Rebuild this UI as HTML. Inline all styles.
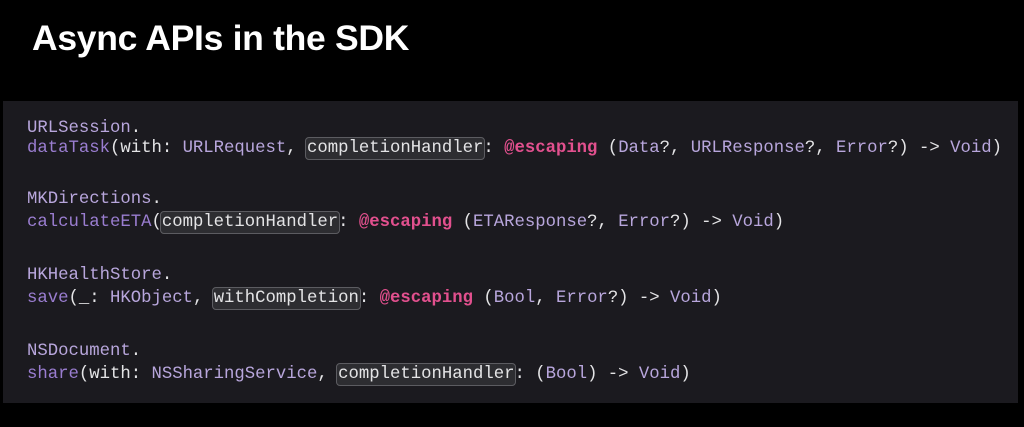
<!DOCTYPE html>
<html><head><meta charset="utf-8"><style>
body{margin:0;width:1024px;height:427px;background:#000;overflow:hidden;position:relative;font-family:"Liberation Sans",sans-serif}
h1{position:absolute;left:32px;top:18px;margin:0;font-size:35.5px;font-weight:bold;color:#fff;letter-spacing:-0.3px}
.panel{position:absolute;left:3px;top:101px;width:1015px;height:302px;background:#1b1a1f}
.l{position:absolute;left:27px;font-family:"Liberation Mono",monospace;font-size:17.3px;color:#e4e4e6;white-space:pre;line-height:20px}
.t{color:#b8a6dc}.f{color:#9a7dd0}.k{color:#e2508e;font-weight:bold}
.b{background:#2d2d31;border:1px solid #5c5c61;border-radius:4px;padding:1px 1px;margin:0 -2px}
</style></head><body>
<h1>Async APIs in the SDK</h1>
<div class="panel"></div>
<div class="l" style="top:119px"><span class="t">URLSession</span>.</div>
<div class="l" style="top:139px"><span class="f">dataTask</span>(with: <span class="t">URLRequest</span>, <span class="b">completionHandler</span>: <span class="k">@escaping</span> (<span class="t">Data</span>?, <span class="t">URLResponse</span>?, <span class="t">Error</span>?) -&gt; <span class="t">Void</span>)</div>
<div class="l" style="top:190px"><span class="t">MKDirections</span>.</div>
<div class="l" style="top:213px"><span class="f">calculateETA</span>(<span class="b">completionHandler</span>: <span class="k">@escaping</span> (<span class="t">ETAResponse</span>?, <span class="t">Error</span>?) -&gt; <span class="t">Void</span>)</div>
<div class="l" style="top:266px"><span class="t">HKHealthStore</span>.</div>
<div class="l" style="top:289px"><span class="f">save</span>(_: <span class="t">HKObject</span>, <span class="b">withCompletion</span>: <span class="k">@escaping</span> (<span class="t">Bool</span>, <span class="t">Error</span>?) -&gt; <span class="t">Void</span>)</div>
<div class="l" style="top:342px"><span class="t">NSDocument</span>.</div>
<div class="l" style="top:365px"><span class="f">share</span>(with: <span class="t">NSSharingService</span>, <span class="b">completionHandler</span>: (<span class="t">Bool</span>) -&gt; <span class="t">Void</span>)</div>
</body></html>
